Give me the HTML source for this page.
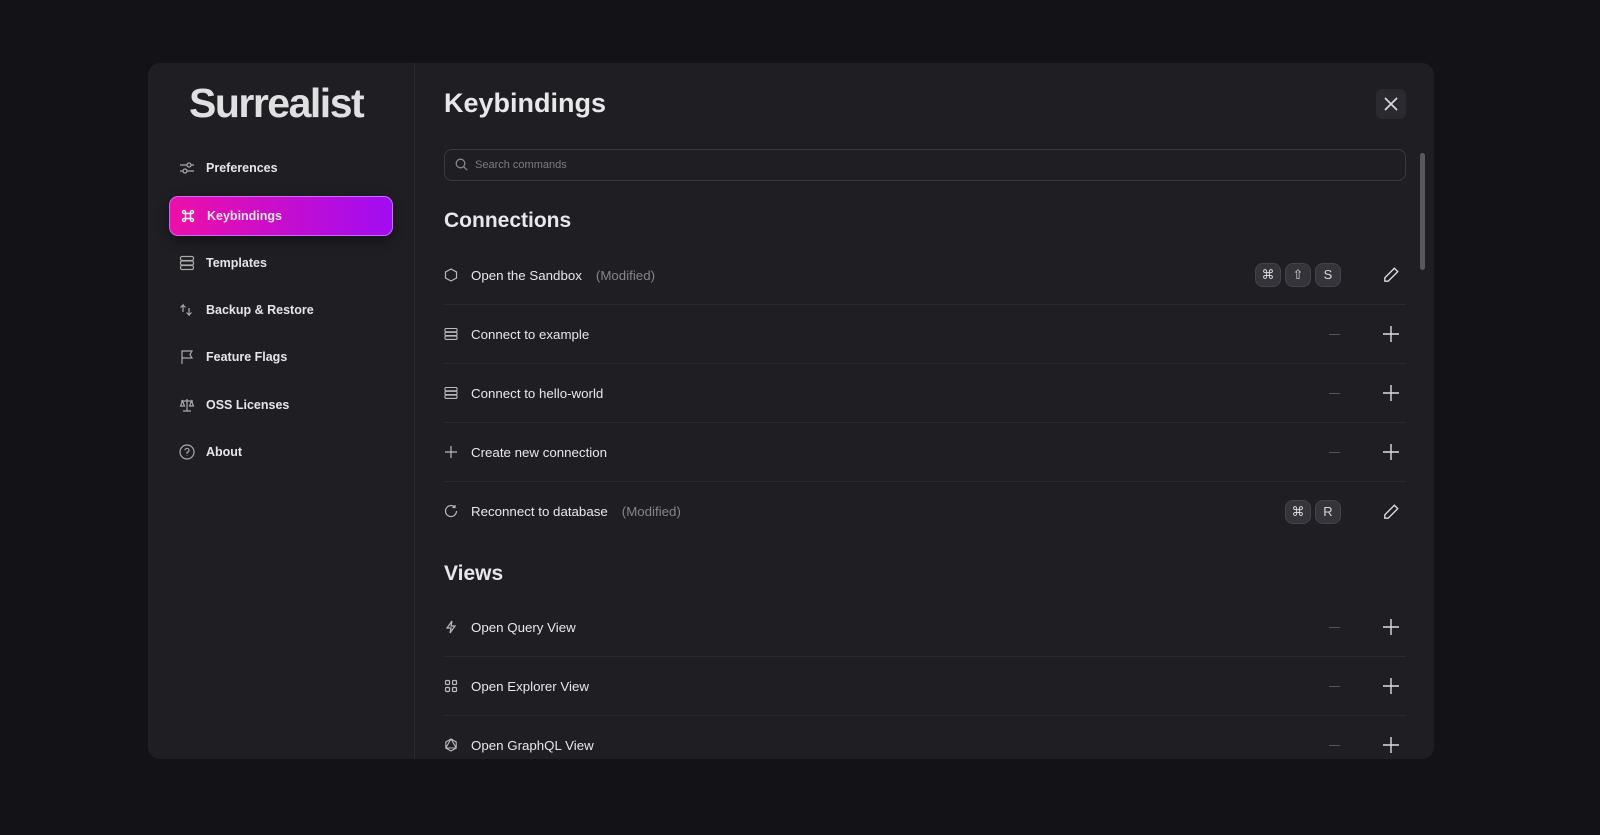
<!DOCTYPE html><html><head><style>
*{box-sizing:border-box;margin:0;padding:0}
body{width:1600px;height:835px;background:#131217;font-family:"Liberation Sans",sans-serif;position:relative;overflow:hidden;color:#e8e8ea}
.modal{position:absolute;left:148px;top:63px;width:1286px;height:696px;background:#1f1e23;border-radius:12px;overflow:hidden}
.side{position:absolute;left:0;top:0;width:267px;height:100%;border-right:1px solid #2a292f}
.logo{position:absolute;left:41px;top:18px;line-height:44px;font-size:41px;font-weight:bold;letter-spacing:-1.5px;color:#e0e0e2}
.nav{position:absolute;left:21px;width:224px;height:40px;display:flex;align-items:center;font-size:12.5px;font-weight:bold;color:#e6e6e8}
.nav svg{position:absolute;left:10px;width:16px;height:16px}
.nav span{position:absolute;left:37px}
.active{background:linear-gradient(90deg,#ee0fa8,#a10cf2);border-radius:9px;border:1px solid #c86bff;box-shadow:0 4px 12px rgba(0,0,0,.4)}
.main{position:absolute;left:296px;top:0;right:28px}
h1{position:absolute;top:25px;font-size:27px;font-weight:bold}
.close{position:absolute;right:0;top:26px;width:30px;height:30px;background:#2b2a30;border-radius:6px}
.search{position:absolute;top:86px;left:0;right:0;height:32px;border:1px solid #3a393f;border-radius:8px;font-size:11px;color:#7c7b82;padding:9px 0 0 30px}
.search svg{position:absolute;left:10px;top:8px}
h2{position:absolute;font-size:21px;font-weight:bold;left:0}
.row{position:absolute;left:0;right:0;height:59px;border-bottom:1px solid #2b2a30;font-size:13.3px;display:flex;align-items:center}
.row .ic{position:absolute;left:0;top:22px}
.row .t{position:absolute;left:27px}
.row .m{color:#86858c;margin-left:14px}
.dash{position:absolute;right:66px;width:11px;height:1px;background:#56555b}
.plus{position:absolute;right:6px}
.key{position:absolute;width:26px;height:24px;background:#35343a;border:1px solid #444349;border-radius:8px;font-size:13px;color:#d8d8da;text-align:center;line-height:22px}
.pen{position:absolute;right:6px}
.scroll{position:absolute;left:1272px;top:90px;width:5px;height:117px;background:#5a595f;border-radius:3px}
</style></head><body>
<div class="modal">
<div class="side">
<div class="logo">Surrealist</div>
<div class="nav" style="top:85px"><svg viewBox="0 0 16 16" fill="none" stroke="#aaa" stroke-width="1.2"><path d="M1 5h14M1 11h14"/><circle cx="10" cy="5" r="2" fill="#1f1e23"/><circle cx="6" cy="11" r="2" fill="#1f1e23"/></svg><span>Preferences</span></div>
<div class="nav active" style="top:133px"><svg viewBox="0 0 16 16" fill="none" stroke="#fff" stroke-width="1.4"><path d="M5.5 5.5h5v5h-5zM5.5 5.5V4A1.5 1.5 0 1 0 4 5.5h1.5M10.5 5.5V4A1.5 1.5 0 1 1 12 5.5h-1.5M5.5 10.5V12A1.5 1.5 0 1 1 4 10.5h1.5M10.5 10.5V12a1.5 1.5 0 1 0 1.5-1.5h-1.5"/></svg><span>Keybindings</span></div>
<div class="nav" style="top:180px"><svg viewBox="0 0 16 16" fill="none" stroke="#aaa" stroke-width="1.2"><rect x="1.5" y="1.5" width="13" height="4" rx="1.5"/><rect x="1.5" y="6" width="13" height="4" rx="1.5"/><rect x="1.5" y="10.5" width="13" height="4" rx="1.5"/></svg><span>Templates</span></div>
<div class="nav" style="top:227px"><svg viewBox="0 0 16 16" fill="none" stroke="#aaa" stroke-width="1.2"><path d="M4 10V3L1.5 5.5M4 3l2.5 2.5M10 6v7l-2.5-2.5M10 13l2.5-2.5"/></svg><span>Backup &amp; Restore</span></div>
<div class="nav" style="top:274px"><svg viewBox="0 0 16 16" fill="none" stroke="#aaa" stroke-width="1.2"><path d="M3 15V2h10l-2 3.5 2 3.5H3"/></svg><span>Feature Flags</span></div>
<div class="nav" style="top:322px"><svg viewBox="0 0 16 16" fill="none" stroke="#aaa" stroke-width="1.2"><path d="M8 2v12M4 14h8M2 4h12M3.5 4L1.5 9h4zM12.5 4l-2 5h4z"/></svg><span>OSS Licenses</span></div>
<div class="nav" style="top:369px"><svg viewBox="0 0 16 16" fill="none" stroke="#aaa" stroke-width="1.2"><circle cx="8" cy="8" r="7"/><path d="M6 6.3a2 2 0 1 1 2 2v1.5M8 11.5v.5"/></svg><span>About</span></div>
</div>
<div class="main">
<h1>Keybindings</h1>
<div class="close"><svg width="30" height="30" viewBox="0 0 30 30" stroke="#ddd" stroke-width="1.6"><path d="M9 9l12 12M21 9L9 21"/></svg></div>
<div class="search"><svg width="13" height="13" viewBox="0 0 13 13" fill="none" stroke="#888" stroke-width="1.3"><circle cx="5.5" cy="5.5" r="4.3"/><path d="M8.7 8.7l3.5 3.5"/></svg>Search commands</div>
<h2 style="top:146px">Connections</h2>
<div class="row" style="top:183px"><svg class="ic" width="14" height="14" viewBox="0 0 14 14" fill="none" stroke="#bbb" stroke-width="1.2"><path d="M7 1l5.5 3v6L7 13 1.5 10V4z"/></svg><span class="t">Open the Sandbox<span class="m">(Modified)</span></span>
<div class="key" style="right:125px">⌘</div><div class="key" style="right:95px">⇧</div><div class="key" style="right:65px">S</div>
<svg class="pen" width="18" height="18" viewBox="0 0 16 16" fill="none" stroke="#ddd" stroke-width="1.2"><path d="M11 2l3 3-8.5 8.5H2.5v-3z"/></svg></div>
<div class="row" style="top:242px"><svg class="ic" width="14" height="14" viewBox="0 0 14 14" fill="none" stroke="#bbb" stroke-width="1.1"><rect x="1" y="1.5" width="12" height="3.3" rx="1"/><rect x="1" y="5.3" width="12" height="3.3" rx="1"/><rect x="1" y="9.1" width="12" height="3.3" rx="1"/></svg><span class="t">Connect to example</span><div class="dash"></div><svg class="plus" width="18" height="18" viewBox="0 0 18 18" stroke="#ddd" stroke-width="1.4"><path d="M9 1v16M1 9h16"/></svg></div>
<div class="row" style="top:301px"><svg class="ic" width="14" height="14" viewBox="0 0 14 14" fill="none" stroke="#bbb" stroke-width="1.1"><rect x="1" y="1.5" width="12" height="3.3" rx="1"/><rect x="1" y="5.3" width="12" height="3.3" rx="1"/><rect x="1" y="9.1" width="12" height="3.3" rx="1"/></svg><span class="t">Connect to hello-world</span><div class="dash"></div><svg class="plus" width="18" height="18" viewBox="0 0 18 18" stroke="#ddd" stroke-width="1.4"><path d="M9 1v16M1 9h16"/></svg></div>
<div class="row" style="top:360px"><svg class="ic" width="14" height="14" viewBox="0 0 14 14" stroke="#bbb" stroke-width="1.2"><path d="M7 1v12M1 7h12"/></svg><span class="t">Create new connection</span><div class="dash"></div><svg class="plus" width="18" height="18" viewBox="0 0 18 18" stroke="#ddd" stroke-width="1.4"><path d="M9 1v16M1 9h16"/></svg></div>
<div class="row" style="top:419px;border-bottom:none"><svg class="ic" width="14" height="14" viewBox="0 0 14 14" fill="none" stroke="#bbb" stroke-width="1.2"><path d="M12.5 7A5.5 5.5 0 1 1 10.5 2.8M11 1v2.5H8.5"/></svg><span class="t">Reconnect to database<span class="m">(Modified)</span></span>
<div class="key" style="right:95px">⌘</div><div class="key" style="right:65px">R</div>
<svg class="pen" width="18" height="18" viewBox="0 0 16 16" fill="none" stroke="#ddd" stroke-width="1.2"><path d="M11 2l3 3-8.5 8.5H2.5v-3z"/></svg></div>
<h2 style="top:499px">Views</h2>
<div class="row" style="top:535px"><svg class="ic" width="14" height="14" viewBox="0 0 14 14" fill="none" stroke="#bbb" stroke-width="1.2"><path d="M8 1L3 8h4l-1 5 5-7H7z"/></svg><span class="t">Open Query View</span><div class="dash"></div><svg class="plus" width="18" height="18" viewBox="0 0 18 18" stroke="#ddd" stroke-width="1.4"><path d="M9 1v16M1 9h16"/></svg></div>
<div class="row" style="top:594px"><svg class="ic" width="14" height="14" viewBox="0 0 14 14" fill="none" stroke="#bbb" stroke-width="1.2"><rect x="1.5" y="1.5" width="4" height="4" rx="1"/><rect x="8.5" y="1.5" width="4" height="4" rx="1"/><rect x="1.5" y="8.5" width="4" height="4" rx="1"/><rect x="8.5" y="8.5" width="4" height="4" rx="1"/></svg><span class="t">Open Explorer View</span><div class="dash"></div><svg class="plus" width="18" height="18" viewBox="0 0 18 18" stroke="#ddd" stroke-width="1.4"><path d="M9 1v16M1 9h16"/></svg></div>
<div class="row" style="top:653px"><svg class="ic" width="14" height="14" viewBox="0 0 14 14" fill="none" stroke="#bbb" stroke-width="1.1"><path d="M7 1l5.2 3v6L7 13 1.8 10V4zM7 1L1.8 10h10.4z"/></svg><span class="t">Open GraphQL View</span><div class="dash"></div><svg class="plus" width="18" height="18" viewBox="0 0 18 18" stroke="#ddd" stroke-width="1.4"><path d="M9 1v16M1 9h16"/></svg></div>
</div>
<div class="scroll"></div>
</div>
</body></html>
